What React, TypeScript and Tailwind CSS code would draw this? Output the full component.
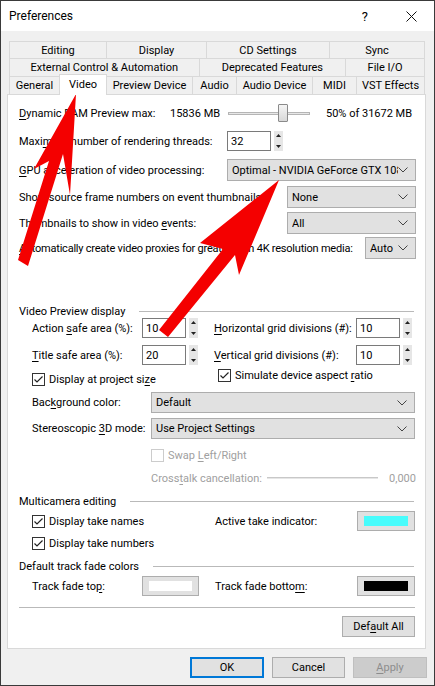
import React from "react";

function U({ t }: { t: string }) {
  const i = t.indexOf("&");
  if (i < 0) return <>{t}</>;
  return (
    <>
      {t.slice(0, i)}
      <span className="underline underline-offset-[2px] decoration-[1px]">{t[i + 1]}</span>
      {t.slice(i + 2)}
    </>
  );
}

function Chevron() {
  return (
    <svg width="10" height="6" viewBox="0 0 10 6" className="shrink-0">
      <polyline points="0.5,0.5 5,5 9.5,0.5" fill="none" stroke="#444" strokeWidth="1" />
    </svg>
  );
}

function Dropdown({ text, w, h = 22 }: { text: string; w: number; h?: number }) {
  return (
    <div
      className="flex items-center bg-[#e1e1e1] border border-[#adadad] pl-[4px] pr-[7px] overflow-hidden shrink-0"
      style={{ width: w, height: h }}
    >
      <span className="flex-1 whitespace-nowrap overflow-hidden">{text}</span>
      <Chevron />
    </div>
  );
}

function Spin({ v }: { v: string }) {
  return (
    <div className="flex items-stretch h-[20px] shrink-0">
      <div className="w-[44px] border border-[#7a7a7a] bg-white flex items-center pl-[3px]">{v}</div>
      <div className="w-[9px] ml-[3px] bg-[#e6e6e6] flex flex-col items-center justify-between py-[3px]">
        <svg width="5" height="3" viewBox="0 0 5 3"><polygon points="0,3 2.5,0 5,3" fill="#222" /></svg>
        <svg width="5" height="3" viewBox="0 0 5 3"><polygon points="0,0 2.5,3 5,0" fill="#222" /></svg>
      </div>
    </div>
  );
}

function Check({ on = true, disabled = false }: { on?: boolean; disabled?: boolean }) {
  return (
    <div
      className={
        "w-[13px] h-[13px] border bg-white flex items-center justify-center shrink-0 " +
        (disabled ? "border-[#cccccc]" : "border-[#333333]")
      }
    >
      {on && (
        <svg width="11" height="11" viewBox="0 0 11 11">
          <polyline points="1.5,5.5 4,8 9.5,2.5" fill="none" stroke="#222" strokeWidth="1.2" />
        </svg>
      )}
    </div>
  );
}

function ColorBtn({ color, w }: { color: string; w: number }) {
  return (
    <div
      className="h-[20px] bg-[#e1e1e1] border border-[#adadad] flex items-center justify-center shrink-0"
      style={{ width: w }}
    >
      <div className="h-[10px]" style={{ width: w - 14, background: color }} />
    </div>
  );
}

function Group({ label }: { label: string }) {
  return (
    <div className="flex items-center h-[14px] pr-[11px]">
      <span className="whitespace-nowrap">{label}</span>
      <div className="flex-1 h-px bg-[#b9b9b9] ml-[14px]" />
    </div>
  );
}

function Tab({ label, w, sel = false }: { label: string; w: number; sel?: boolean }) {
  return (
    <div
      className={
        "flex items-center justify-center border-t border-l border-r border-[#d9d9d9] -ml-px first:ml-0 whitespace-nowrap " +
        (sel ? "bg-white h-[21px] relative z-10 mb-[-1px] pb-[2px]" : "bg-[#f0f0f0] h-full")
      }
      style={{ width: w }}
    >
      {label}
    </div>
  );
}

function Btn({ label, w, kind = "normal" }: { label: React.ReactNode; w: number; kind?: "normal" | "default" | "disabled" }) {
  const cls =
    kind === "default"
      ? "border-2 border-[#0078d7] bg-[#e1e1e1]"
      : kind === "disabled"
      ? "border border-[#bfbfbf] bg-[#cccccc] text-[#8c8c8c]"
      : "border border-[#adadad] bg-[#e1e1e1]";
  return (
    <div className={"h-[21px] flex items-center justify-center shrink-0 " + cls} style={{ width: w }}>
      {label}
    </div>
  );
}

export default function App() {
  return (
    <div className="w-[435px] h-[686px] bg-[#f0f0f0] border border-[#3a3a3a] flex flex-col relative overflow-hidden text-[11px] leading-none text-black font-['Roboto','Noto_Sans',sans-serif]">
      {/* Title bar */}
      <div className="h-[30px] bg-white flex items-center pl-[8px] shrink-0">
        <span className="text-[12px]">Preferences</span>
        <span className="ml-auto mr-[38px] text-[13px]">?</span>
        <svg width="11" height="11" viewBox="0 0 11 11" className="mr-[17px]">
          <line x1="0.5" y1="0.5" x2="10.5" y2="10.5" stroke="#111" strokeWidth="1" />
          <line x1="10.5" y1="0.5" x2="0.5" y2="10.5" stroke="#111" strokeWidth="1" />
        </svg>
      </div>

      {/* Tabs */}
      <div className="mt-[10px] ml-[8px] w-[416px] flex flex-col shrink-0">
        <div className="flex h-[17px]">
          <Tab label="Editing" w={98} />
          <Tab label="Display" w={101} />
          <Tab label="CD Settings" w={124} />
          <Tab label="Sync" w={96} />
        </div>
        <div className="flex h-[18px]">
          <Tab label="External Control & Automation" w={191} />
          <Tab label="Deprecated Features" w={148} />
          <Tab label="File I/O" w={80} />
        </div>
        <div className="flex h-[18px] items-end">
          <Tab label="General" w={51} />
          <Tab label="Video" w={48} sel />
          <Tab label="Preview Device" w={87} />
          <Tab label="Audio" w={45} />
          <Tab label="Audio Device" w={77} />
          <Tab label="MIDI" w={45} />
          <Tab label="VST Effects" w={69} />
        </div>
      </div>

      {/* Panel */}
      <div className="ml-[6px] w-[419px] h-[555px] border border-[#d9d9d9] bg-white flex flex-col pl-[11px] shrink-0">
        {/* RAM */}
        <div className="mt-[7px] h-[22px] flex items-center">
          <span className="w-[151px] whitespace-nowrap"><U t="&Dynamic RAM Preview max:" /></span>
          <span className="w-[58px] whitespace-nowrap">15836 MB</span>
          <div className="relative w-[82px] h-[22px] flex items-center shrink-0">
            <div className="w-full h-[3px] bg-[#e7e7e7] border border-[#b5b5b5]" />
            <div className="absolute left-[50px] top-[2px] w-[10px] h-[18px] bg-gradient-to-b from-[#f5f5f5] to-[#d8d8d8] border border-[#8a8a8a] rounded-[1px]" />
          </div>
          <span className="ml-[16px] whitespace-nowrap">50% of 31672 MB</span>
        </div>
        {/* Threads */}
        <div className="mt-[6px] h-[22px] flex items-center">
          <span className="w-[208px] whitespace-nowrap"><U t="Maxi&mum number of rendering threads:" /></span>
          <Spin v="32" />
        </div>
        {/* GPU */}
        <div className="mt-[7px] h-[22px] flex items-center">
          <span className="w-[208px] whitespace-nowrap"><U t="&GPU acceleration of video processing:" /></span>
          <Dropdown text="Optimal - NVIDIA GeForce GTX 1080" w={189} />
        </div>
        {/* Show source */}
        <div className="mt-[5px] h-[22px] flex items-center">
          <span className="w-[268px] whitespace-nowrap overflow-hidden"><U t="Show source frame &numbers on event thumbnails:" /></span>
          <Dropdown text="None" w={129} />
        </div>
        {/* Thumbnails */}
        <div className="mt-[4px] h-[22px] flex items-center">
          <span className="w-[268px] whitespace-nowrap"><U t="Thumbnails to show in video &events:" /></span>
          <Dropdown text="All" w={129} />
        </div>
        {/* Auto proxies */}
        <div className="mt-[3px] h-[22px] flex items-center">
          <span className="w-[346px] whitespace-nowrap tracking-[-0.22px]"><U t="&Automatically create video proxies for greater than 4K resolution media:" /></span>
          <Dropdown text="Auto" w={51} />
        </div>

        {/* Video Preview display */}
        <div className="mt-[45px]">
          <Group label="Video Preview display" />
        </div>
        <div className="h-[20px] flex items-center pl-[13px]">
          <span className="w-[110px] whitespace-nowrap"><U t="Action &safe area (%):" /></span>
          <Spin v="10" />
          <span className="ml-[16px] w-[142px] whitespace-nowrap"><U t="&Horizontal grid divisions (#):" /></span>
          <Spin v="10" />
        </div>
        <div className="mt-[7px] h-[20px] flex items-center pl-[13px]">
          <span className="w-[110px] whitespace-nowrap"><U t="&Title safe area (%):" /></span>
          <Spin v="20" />
          <span className="ml-[16px] w-[142px] whitespace-nowrap"><U t="&Vertical grid divisions (#):" /></span>
          <Spin v="10" />
        </div>
        <div className="mt-[3px] h-[19px] flex pl-[13px]">
          <div className="w-[186px] flex items-center gap-[4px] mt-[5px] h-[13px]">
            <Check />
            <span className="whitespace-nowrap"><U t="Display at project si&ze" /></span>
          </div>
          <div className="flex items-center gap-[4px] mt-[1px] h-[13px]">
            <Check />
            <span className="whitespace-nowrap"><U t="Simulate device aspect &ratio" /></span>
          </div>
        </div>
        <div className="mt-[5px] h-[21px] flex items-center pl-[13px]">
          <span className="w-[119px] whitespace-nowrap"><U t="Bac&kground color:" /></span>
          <Dropdown text="Default" w={264} h={21} />
        </div>
        <div className="mt-[5px] h-[21px] flex items-center pl-[13px]">
          <span className="w-[119px] whitespace-nowrap"><U t="Stereoscopic &3D mode:" /></span>
          <Dropdown text="Use Project Settings" w={264} h={21} />
        </div>
        <div className="mt-[7px] h-[18px] flex items-center pl-[132px] gap-[4px] text-[#a0a0a0]">
          <Check on={false} disabled />
          <span className="whitespace-nowrap"><U t="Swap &Left/Right" /></span>
        </div>
        <div className="mt-[6px] h-[16px] flex items-center pl-[132px] pr-[9px] text-[#a0a0a0]">
          <span className="w-[116px] whitespace-nowrap"><U t="Cross&talk cancellation:" /></span>
          <div className="w-[111px] h-[2px] bg-[#e6e6e6] border-t border-[#c8c8c8]" />
          <span className="ml-auto">0,000</span>
        </div>

        {/* Multicamera */}
        <div className="mt-[8px]">
          <Group label="Multicamera editing" />
        </div>
        <div className="mt-[3px] h-[20px] flex items-center pl-[13px]">
          <div className="w-[183px] flex items-center gap-[4px]">
            <Check />
            <span className="whitespace-nowrap">Display take names</span>
          </div>
          <span className="w-[142px] whitespace-nowrap">Active take indicator:</span>
          <ColorBtn color="#48fcfc" w={58} />
        </div>
        <div className="mt-[4px] h-[16px] flex items-center pl-[13px] gap-[4px]">
          <Check />
          <span className="whitespace-nowrap">Display take numbers</span>
        </div>

        {/* Track fade */}
        <div className="mt-[8px]">
          <Group label="Default track fade colors" />
        </div>
        <div className="mt-[3px] h-[20px] flex items-center pl-[13px]">
          <span className="w-[110px] whitespace-nowrap"><U t="Track fade to&p:" /></span>
          <ColorBtn color="#ffffff" w={57} />
          <span className="ml-[16px] w-[142px] whitespace-nowrap"><U t="Track fade botto&m:" /></span>
          <ColorBtn color="#000000" w={58} />
        </div>
        <div className="mt-[11px] mr-[10px] h-px bg-[#b9b9b9]" />
        <div className="mt-[8px] mr-[10px] flex justify-end">
          <Btn label={<U t="Def&ault All" />} w={73} />
        </div>
      </div>

      {/* Bottom buttons */}
      <div className="mt-[8px] flex justify-end gap-[8px] pr-[7px]">
        <Btn label="OK" w={74} kind="default" />
        <Btn label="Cancel" w={73} />
        <Btn label={<U t="&Apply" />} w={74} kind="disabled" />
      </div>

      {/* Red arrows overlay */}
      <svg className="absolute left-0 top-0 pointer-events-none" width="435" height="686" viewBox="0 0 435 686">
        <polygon
          points="75,93 69,194 62,153 27,265 17,259 48,160 33,168"
          fill="#f40000"
        />
        <polygon
          points="278,179 238,274 234,254 167,336 158,329 222,248 199,242"
          fill="#f40000"
        />
      </svg>
    </div>
  );
}
